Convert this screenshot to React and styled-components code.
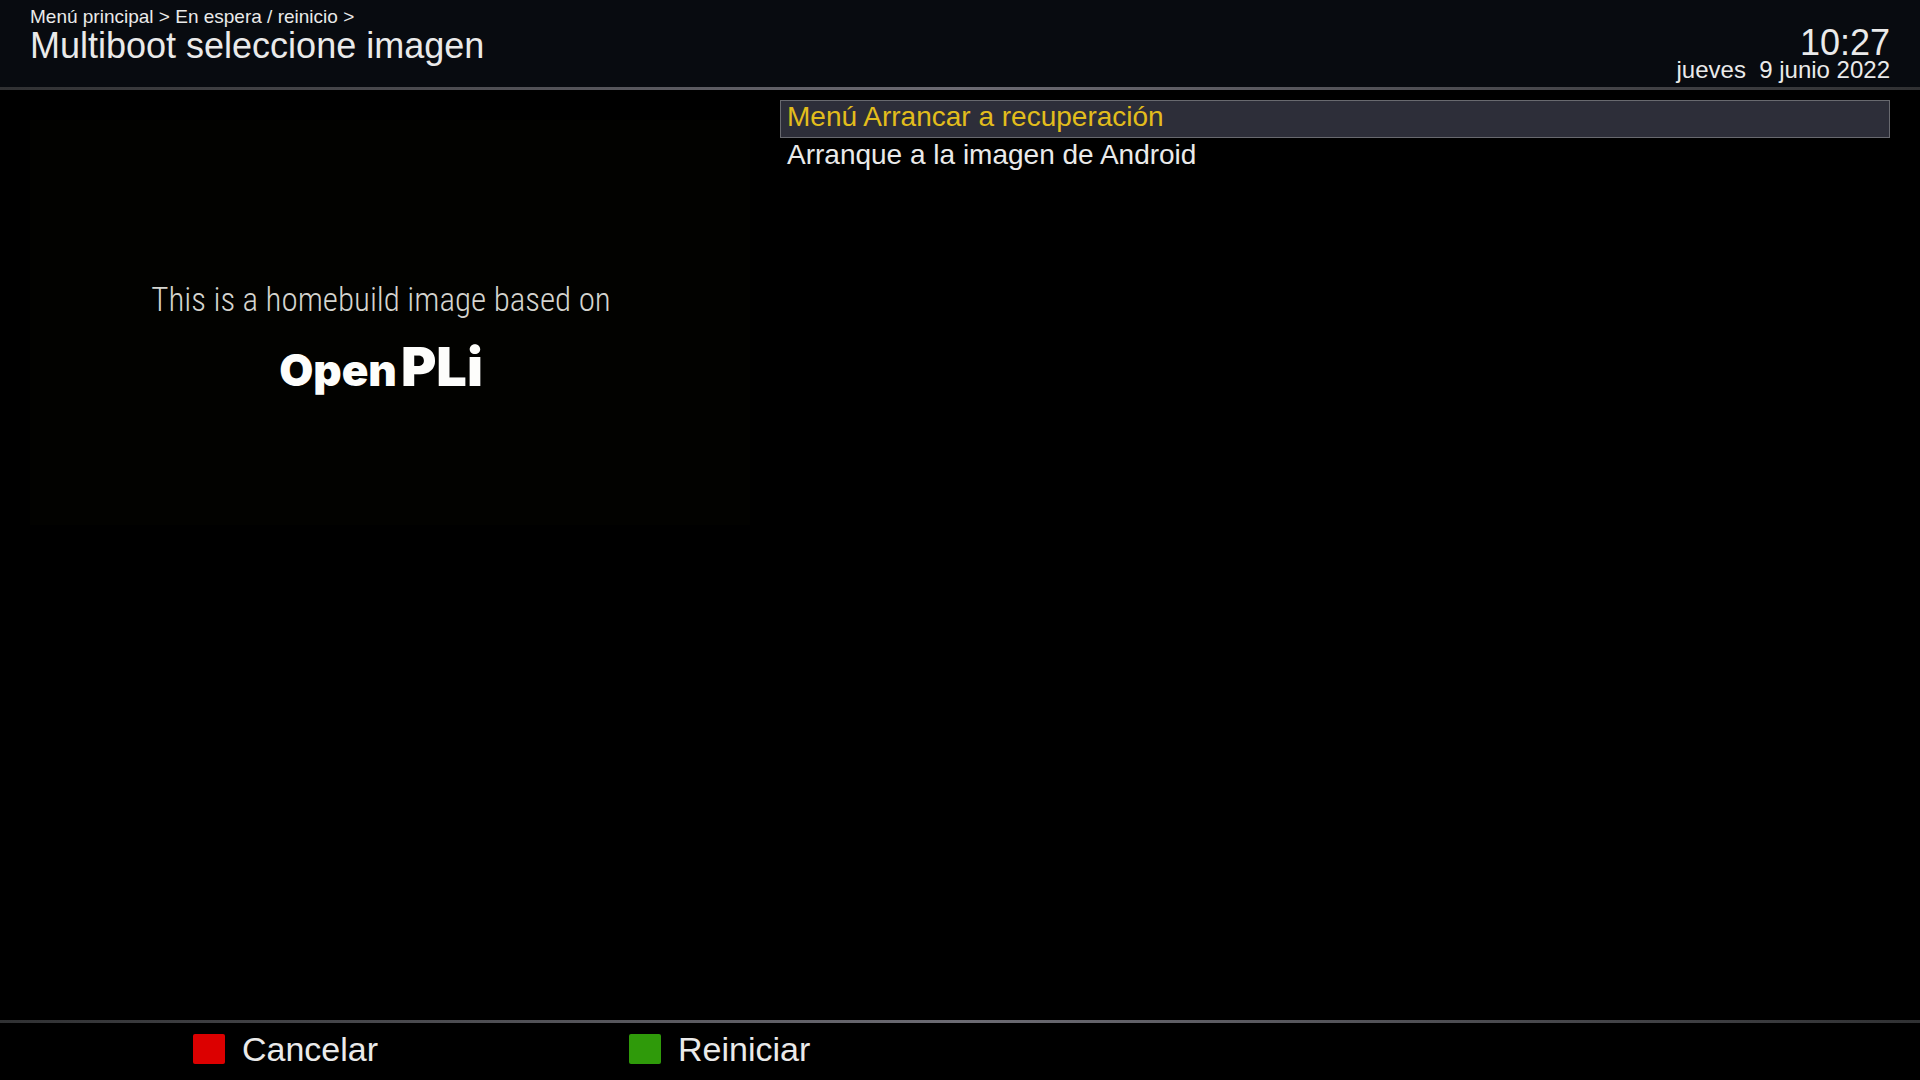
import React, { useState } from 'react';
import styled, { createGlobalStyle } from 'styled-components';

const GlobalStyle = createGlobalStyle`
  * {
    box-sizing: border-box;
  }

  body {
    margin: 0;
    background: #000;
    color: #eaeaea;
    font-family: 'Liberation Sans', Arial, sans-serif;
  }
`;

const Screen = styled.div`
  display: flex;
  flex-direction: column;
  min-height: 100vh;
`;

const Header = styled.header`
  display: flex;
  justify-content: space-between;
  height: 87px;
  padding: 6px 30px 0;
  background: #080b10;
`;

const Divider = styled.div`
  height: 3px;
  background: linear-gradient(to right, #303133, #6c6b73 50%, #303133);
`;

const Breadcrumb = styled.nav`
  font-size: 19px;
  line-height: 22px;
`;

const Title = styled.h1`
  margin: 0;
  font-size: 36px;
  font-weight: 400;
  line-height: 36px;
`;

const Clock = styled.div`
  padding-top: 20px;
  text-align: right;
`;

const Time = styled.div`
  font-size: 36px;
  line-height: 34px;
`;

const Today = styled.div`
  font-size: 24px;
  line-height: 20px;
  white-space: pre;
`;

const Main = styled.main`
  display: flex;
  flex: 1;
  align-items: flex-start;
  gap: 30px;
  padding: 10px 30px;
`;

const Preview = styled.section`
  display: flex;
  flex-direction: column;
  align-items: center;
  justify-content: center;
  width: 720px;
  height: 405px;
  margin-top: 20px;
  padding: 32px 18px 0 0;
  background: #020200;
`;

const Tagline = styled.p`
  margin: 0;
  color: #d4d4cf;
  font-family: 'Roboto Condensed', Roboto, sans-serif;
  font-size: 33px;
  font-weight: 300;
  line-height: 60px;
`;

const Logo = styled.div`
  color: #fdfdfb;
  font-family: Inter, sans-serif;
  font-size: 44px;
  font-weight: 900;
  line-height: 74px;
`;

const LogoBig = styled.span`
  margin-left: 4px;
  font-size: 54px;
`;

const List = styled.ul`
  flex: 1;
  margin: 0;
  padding: 0;
  list-style: none;
`;

const Item = styled.button`
  display: block;
  width: 100%;
  height: 38px;
  padding: 0 6px 4px;
  border: 1px solid ${props => (props.$selected ? '#68696f' : 'transparent')};
  background: ${props => (props.$selected ? '#2d2e39' : 'transparent')};
  color: ${props => (props.$selected ? '#e2bd1c' : 'inherit')};
  font: inherit;
  font-size: 28px;
  line-height: 32px;
  text-align: left;
`;

const Footer = styled.footer`
  display: flex;
  height: 57px;
  padding-left: 193px;
`;

const KeyButton = styled.button`
  display: flex;
  align-items: center;
  gap: 17px;
  width: 436px;
  padding: 0 0 5px;
  border: none;
  background: transparent;
  color: inherit;
  font: inherit;
  font-size: 34px;
`;

const KeyColor = styled.span`
  width: 32px;
  height: 30px;
  border-radius: 2px;
  background: ${props => props.$color};
`;

const images = ['Menú Arrancar a recuperación', 'Arranque a la imagen de Android'];

const App = () => {
  const [selected, setSelected] = useState(0);

  return (
    <Screen>
      <GlobalStyle />
      <Header>
        <div>
          <Breadcrumb>{'Menú principal > En espera / reinicio >'}</Breadcrumb>
          <Title>Multiboot seleccione imagen</Title>
        </div>
        <Clock>
          <Time>10:27</Time>
          <Today>{'jueves  9 junio 2022'}</Today>
        </Clock>
      </Header>
      <Divider />
      <Main>
        <Preview>
          <Tagline>This is a homebuild image based on</Tagline>
          <Logo>
            Open<LogoBig>PLi</LogoBig>
          </Logo>
        </Preview>
        <List>
          {images.map((image, i) => (
            <li key={image}>
              <Item $selected={i === selected} onClick={() => setSelected(i)}>
                {image}
              </Item>
            </li>
          ))}
        </List>
      </Main>
      <Divider />
      <Footer>
        <KeyButton>
          <KeyColor $color="#dc0000" />
          Cancelar
        </KeyButton>
        <KeyButton>
          <KeyColor $color="#2f9a0a" />
          Reiniciar
        </KeyButton>
      </Footer>
    </Screen>
  );
};

export default App;
